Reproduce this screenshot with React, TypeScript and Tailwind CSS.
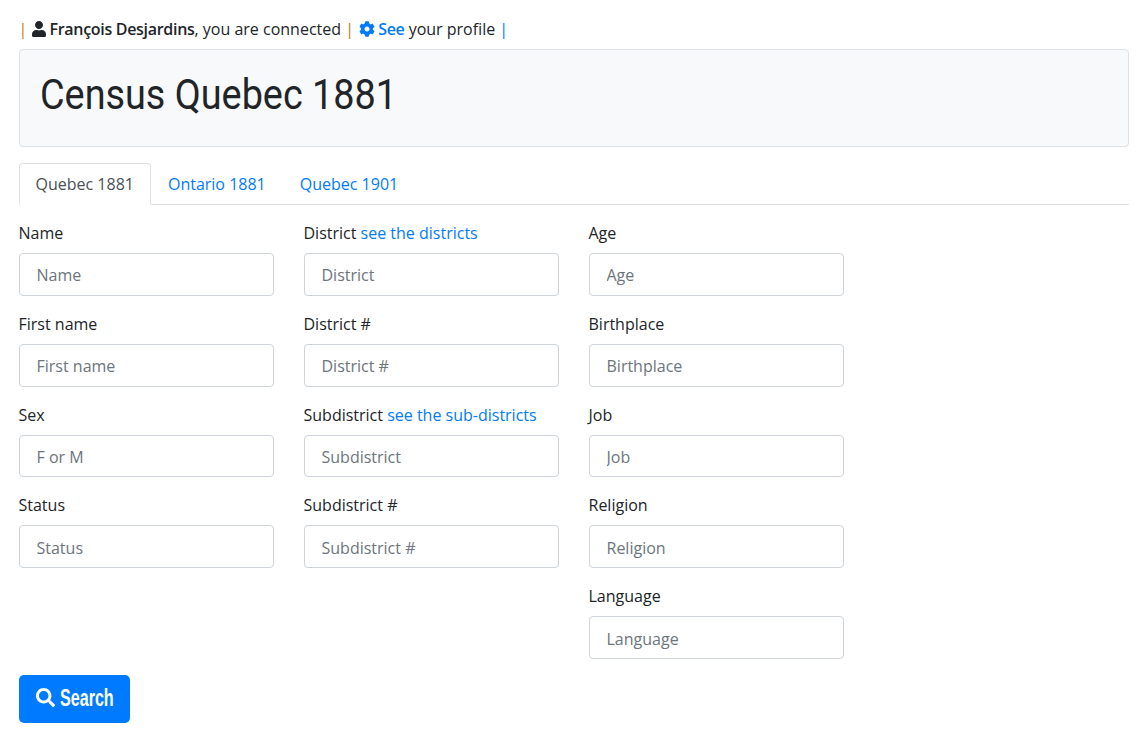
import { FaUser, FaCog, FaSearch } from 'react-icons/fa';

const Field = ({ label, placeholder, link }: { label: string; placeholder: string; link?: string }) => (
    <div className="mb-[16px]">
        <label className="block h-[24px] mb-[8px] text-[16px] leading-[24px] text-[#212529]">
            {label}
            {link && <a className="text-[#007bff]"> {link}</a>}
        </label>
        <input
            type="text"
            placeholder={placeholder}
            className="block w-full h-[42.8px] px-[17px] pt-[2px] text-[16px] bg-white border border-[#ced4da] rounded-[4px] outline-none placeholder:text-[#6c757d]"
        />
    </div>
);

const columns = [
    [
        { label: 'Name', placeholder: 'Name' },
        { label: 'First name', placeholder: 'First name' },
        { label: 'Sex', placeholder: 'F or M' },
        { label: 'Status', placeholder: 'Status' },
    ],
    [
        { label: 'District', placeholder: 'District', link: 'see the districts' },
        { label: 'District #', placeholder: 'District #' },
        { label: 'Subdistrict', placeholder: 'Subdistrict', link: 'see the sub-districts' },
        { label: 'Subdistrict #', placeholder: 'Subdistrict #' },
    ],
    [
        { label: 'Age', placeholder: 'Age' },
        { label: 'Birthplace', placeholder: 'Birthplace' },
        { label: 'Job', placeholder: 'Job' },
        { label: 'Religion', placeholder: 'Religion' },
        { label: 'Language', placeholder: 'Language' },
    ],
];

export default function App() {
    return (
        <div className="min-h-[748px] bg-white pt-[17px] pl-[18.5px] pr-[16px] font-['Open_Sans',sans-serif] text-[16px] leading-[24px] text-[#212529]">
            {/* Connected user */}
            <div className="h-[24px] mb-[8px] flex items-center whitespace-pre">
                <span className="text-[#c67c10]">| </span>
                <FaUser className="size-[16px] mr-[2px]" />
                <b className="font-semibold tracking-[-0.3px]">François Desjardins</b>, you are connected <span className="text-[#c67c10]">| </span>
                <FaCog className="size-[16px] ml-[1px] text-[#007bff] mr-[3px]" />
                <b className="font-semibold text-[#007bff] tracking-[-0.3px]">See</b> your profile <span className="text-[#007bff]">|</span>
            </div>

            {/* Title */}
            <div className="h-[98px] mb-[16px] bg-[#f8f9fa] border border-[#dee2e6] rounded-[4px] px-[20px] pt-[17px]">
                <h1 className="font-['Roboto',sans-serif] text-[42px] leading-[56px] font-normal text-[#212529] origin-left scale-x-[0.9]">Census Quebec 1881</h1>
            </div>

            {/* Tabs */}
            <div className="flex h-[42px] border-b border-[#dee2e6] mb-[16px]">
                <div className="h-[42px] px-[16px] pt-[8px] bg-white border border-[#dee2e6] border-b-white rounded-t-[4px] text-[#495057]">Quebec 1881</div>
                <div className="h-[42px] px-[17px] pt-[9px] text-[#007bff]">Ontario 1881</div>
                <div className="h-[42px] px-[17px] pt-[9px] text-[#007bff]">Quebec 1901</div>
            </div>

            <div className="flex gap-[30px] items-start">
                {columns.map((fields, i) => (
                    <div key={i} className="w-[255px]">
                        {fields.map((f) => (
                            <Field key={f.label} {...f} />
                        ))}
                    </div>
                ))}
            </div>

            <button className="flex items-center h-[48px] w-[111px] pl-[17px] pb-[2px] bg-[#007bff] rounded-[5px] text-white text-[23px] font-['Liberation_Sans',sans-serif] font-bold">
                <FaSearch className="size-[19px] mr-[5px] shrink-0" />
                <span className="inline-block w-[53px] origin-left scale-x-[0.7]">Search</span>
            </button>
        </div>
    );
}
